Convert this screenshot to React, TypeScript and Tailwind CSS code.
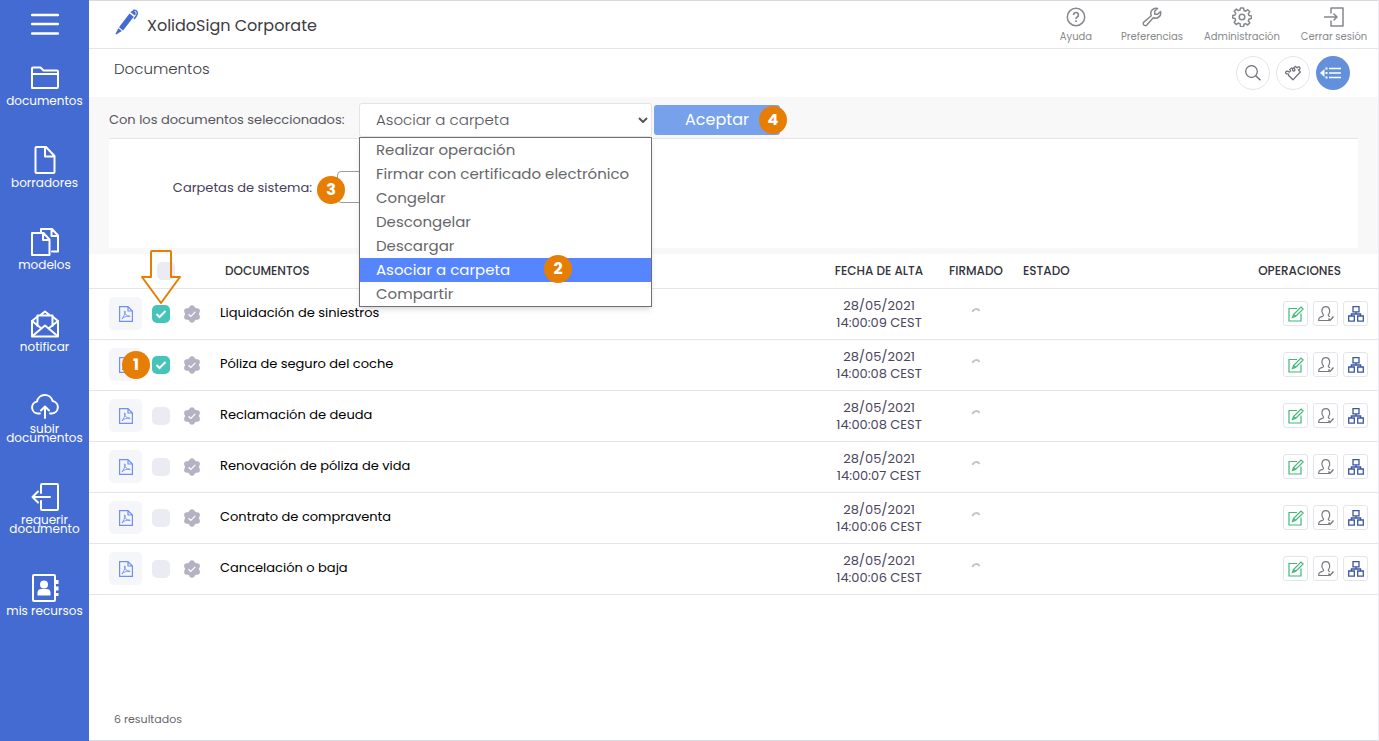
import React, { useState } from 'react';

interface DocumentRow {
  id: number;
  name: string;
  date: string;
  time: string;
}

const DOCUMENTS: DocumentRow[] = [
  { id: 1, name: 'Liquidación de siniestros', date: '28/05/2021', time: '14:00:09 CEST' },
  { id: 2, name: 'Póliza de seguro del coche', date: '28/05/2021', time: '14:00:08 CEST' },
  { id: 3, name: 'Reclamación de deuda', date: '28/05/2021', time: '14:00:08 CEST' },
  { id: 4, name: 'Renovación de póliza de vida', date: '28/05/2021', time: '14:00:07 CEST' },
  { id: 5, name: 'Contrato de compraventa', date: '28/05/2021', time: '14:00:06 CEST' },
  { id: 6, name: 'Cancelación o baja', date: '28/05/2021', time: '14:00:06 CEST' },
];

const ACTIONS = [
  'Realizar operación',
  'Firmar con certificado electrónico',
  'Congelar',
  'Descongelar',
  'Descargar',
  'Asociar a carpeta',
  'Compartir',
];

// Sidebar icons share a 28px box
const SIDEBAR_ITEMS = [
  {
    label: 'documentos',
    icon: <path d="M1 24V4.500a1 1 0 0 1 1-1h7.500l3 3H26a1 1 0 0 1 1 1V23a1 1 0 0 1-1 1H2a1 1 0 0 1-1-1M1 10h26" />,
  },
  {
    label: 'borradores',
    icon: <path d="M5.500 1h9.500l8.500 9v16a1 1 0 0 1-1 1h-17a1 1 0 0 1-1-1V2a1 1 0 0 1 1-1zM14 1v9.500h9.500" />,
  },
  {
    label: 'modelos',
    icon: (
      <>
        <path d="M1 5h11.500l6 6.500V27H1zM12 5v7h6.500" />
        <path d="M10 4V1h11l6 6.500V23.500h-6M20.500 1v7H27" />
      </>
    ),
  },
  {
    label: 'notificar',
    icon: (
      <>
        <path d="M6.500 6.500 1 11v15.500h26V11l-5.500-4.500" />
        <path d="M6.500 16V5.500h15V16M9.500 5 14 1.500 18.500 5" />
        <path d="m1 11 9.500 7.500M27 11l-9.500 7.500M1.500 26 14 15.500 26.500 26" />
      </>
    ),
  },
  {
    label: 'subir documentos',
    icon: (
      <>
        <path d="M9 21.500H7a6 6 0 0 1-1-11.900 8 8 0 0 1 15.600-.6A6.300 6.300 0 0 1 21 21.500h-2" />
        <path d="M14 26V14.500M10 18.500l4-4 4 4" />
      </>
    ),
  },
  {
    label: 'requerir documento',
    icon: (
      <>
        <path d="M10 10V2a1 1 0 0 1 1-1h15a1 1 0 0 1 1 1v24a1 1 0 0 1-1 1H11a1 1 0 0 1-1-1v-8" />
        <path d="M19 14H1.500M7 8.500 1.500 14 7 19.500" />
      </>
    ),
  },
  {
    label: 'mis recursos',
    icon: (
      <>
        <rect x="2" y="1" width="22" height="26" rx="1" />
        <path d="M26 6v4M26 12.500v4M26 19v3" strokeWidth="3" strokeLinecap="butt" />
        <circle cx="13" cy="10.500" r="4" fill="currentColor" stroke="none" />
        <path d="M6.500 21.500v-2.500a4 4 0 0 1 4-4h5a4 4 0 0 1 4 4v2.500z" fill="currentColor" stroke="none" />
      </>
    ),
  },
];

const HEADER_ITEMS = [
  {
    label: 'Ayuda',
    width: 'w-[68px]',
    icon: (
      <>
        <circle cx="10" cy="10" r="8.700" />
        <path d="M7.600 7.900a2.400 2.400 0 1 1 3.600 2.100c-.8.500-1.200.9-1.200 1.900M10 13.300v1.600" strokeWidth="1.700" />
      </>
    ),
  },
  {
    label: 'Preferencias',
    width: 'w-[84px]',
    icon: (
      <path d="M15.500 1.500 12.700 4.300v3h3l2.800-2.800a5.200 5.200 0 0 1-7.200 6.200l-6.500 7.300a2 2 0 0 1-3-2.900l7.500-6.400a5.200 5.200 0 0 1 6.200-7.200z" />
    ),
  },
  {
    label: 'Administración',
    width: 'w-[96px]',
    icon: (
      <>
        <circle cx="10" cy="10" r="2.800" />
        <path d="M8.500 1h3l.5 2.500 1.600.7 2.200-1.500 2 2-1.500 2.200.7 1.600 2.500.5v2.500l-2.500.6-.7 1.600 1.500 2.200-2.100 2.100-2.200-1.400-1.500.6-.5 2.500h-3L8 16.700l-1.600-.6-2.200 1.400-2-2 1.400-2.300-.6-1.600L.700 11V8.500L3 8l.7-1.600-1.500-2.200 2.100-2.100 2.200 1.500L8 3z" />
      </>
    ),
  },
  {
    label: 'Cerrar sesión',
    width: 'w-[88px]',
    icon: (
      <>
        <path d="M7 6.500V1h12v18H7v-5.500" />
        <path d="M0 10h13M9.500 6.500 13 10l-3.500 3.500" />
      </>
    ),
  },
];

function StepBadge({ step, className }: { step: number; className: string }) {
  return (
    <span
      className={`absolute z-20 flex size-7 items-center justify-center rounded-full bg-[#e67e04] text-base font-bold text-white ${className}`}
    >
      {step}
    </span>
  );
}

function Sidebar() {
  return (
    <nav className="flex w-[89px] shrink-0 flex-col items-center bg-[#446bd2] pt-[10px] text-white">
      <button aria-label="Menú" className="mb-[26px]">
        <svg className="size-7" viewBox="0 0 28 28" fill="none" stroke="currentColor" strokeWidth="2.500" strokeLinecap="round">
          <path d="M1 5h26M1 14h26M1 23.500h26" />
        </svg>
      </button>
      <div className="flex flex-col items-center gap-[41px]">
        {SIDEBAR_ITEMS.map((item) => (
          <a key={item.label} href="#" className="flex w-20 flex-col items-center gap-1 text-center text-xs leading-[9px]">
            <svg
              className="size-7"
              viewBox="0 0 28 28"
              fill="none"
              stroke="currentColor"
              strokeWidth="2"
              strokeLinejoin="round"
              strokeLinecap="round"
            >
              {item.icon}
            </svg>
            <span>{item.label}</span>
          </a>
        ))}
      </div>
    </nav>
  );
}

function Header() {
  return (
    <header className="flex h-[49px] items-center justify-between border-y border-t-[#d8d8da] border-b-[#e6e6ea]">
      <div className="flex items-center gap-[6px] pt-[2px] pl-[26px]">
        <svg className="-mt-2 size-[26px]" viewBox="0 0 26 26" fill="#446bd2">
          <path d="M14.500 4.500 18.800 7.800 8 21.500l-4-3.200z" />
          <path d="M3.400 19.200 6.800 22 1.300 25.500l-.8-.7z" />
          <path d="M15.500 3.300c1-1.600 2.800-2 4.200-.9 1.400 1.200 1.400 2.700.2 4.200z" />
          <path d="M18 1.500c2-1 4.500.3 4.300 3-.1 1.500-1.700 3.500-3.200 5.500" fill="none" stroke="#446bd2" strokeWidth="1.500" />
        </svg>
        <span className="text-base text-[#3c3c44]">XolidoSign Corporate</span>
      </div>
      <nav className="flex">
        {HEADER_ITEMS.map((item) => (
          <a
            key={item.label}
            href="#"
            className={`flex flex-col items-center gap-[2px] text-[10px] leading-4 whitespace-nowrap text-[#85888c] ${item.width}`}
          >
            <svg
              className="mt-[2px] size-5"
              viewBox="0 0 20 20"
              fill="none"
              stroke="currentColor"
              strokeWidth="1.500"
              strokeLinejoin="round"
            >
              {item.icon}
            </svg>
            {item.label}
          </a>
        ))}
      </nav>
    </header>
  );
}

function TitleBar() {
  return (
    <div className="flex h-12 items-center justify-between pr-7 pl-[25px]">
      <h1 className="pb-2 text-[15px] font-light text-[#3c3c44]">Documentos</h1>
      <div className="flex gap-[6px] text-[#6d6d75]">
        <button aria-label="Buscar" className="flex size-[34px] items-center justify-center rounded-full border border-[#e4e5ea]">
          <svg className="size-4" viewBox="0 0 16 16" fill="none" stroke="currentColor" strokeWidth="1.200">
            <circle cx="6.500" cy="6.500" r="5.800" />
            <path d="m10.700 10.700 4.800 4.500" strokeWidth="1.400" />
          </svg>
        </button>
        <button aria-label="Complementos" className="flex size-[34px] items-center justify-center rounded-full border border-[#e4e5ea]">
          <svg className="size-4" viewBox="0 0 16 16" fill="none" stroke="currentColor" strokeWidth="1.200" strokeLinejoin="round">
            <path d="M8 14.800 3.300 10.300c.7-.9.200-1.600-.8-1.500C.800 9 0 7.600 1 6.600c.9-.9 2.200-.4 3.200.6l1.500-1.300-1-1.200 1.900-1.900c1.200.2 1 1.300.9 2 0 1.500 1.700 1.700 2.300.6.500-1-.1-1.700-1.300-2.300L10.200 1.300l1.800 1.500c.8-1.200 2.600-1.300 3 .1.300 1.200-.6 1.700-1.700 1.900l2 2.200z" />
          </svg>
        </button>
        <button aria-label="Ver lista" className="flex size-[34px] items-center justify-center rounded-full bg-[#6290da] text-white">
          <svg className="mr-1 h-3 w-[22px]" viewBox="0 0 22 12" fill="none" stroke="currentColor" strokeWidth="1.500">
            <path d="M9 1.500h12M9 6h12M9 10.500h12" />
            <path d="M5.500 1.500h2M5.500 6h2M5.500 10.500h2" strokeWidth="2" />
            <path d="M4.500 2v8L0 6z" fill="currentColor" stroke="none" />
          </svg>
        </button>
      </div>
    </div>
  );
}

function ActionBar() {
  const [action, setAction] = useState('Asociar a carpeta');

  return (
    <section className="bg-[#f8f8f9] px-5 pt-[6px] pb-[6px]">
      <div className="flex h-[35px] items-start">
        <label htmlFor="action" className="w-[250px] shrink-0 text-[13px] leading-[34px] whitespace-nowrap text-[#55555c]">
          Con los documentos seleccionados:
        </label>
        <div className="relative w-[293px] shrink-0">
          <select
            id="action"
            value={action}
            onChange={(e) => setAction(e.target.value)}
            className="h-[34px] w-full appearance-none rounded-[3px] border border-[#e4e4e8] bg-white pl-4 text-[15px] font-light text-[#55555a]"
          >
            {ACTIONS.map((name) => (
              <option key={name}>{name}</option>
            ))}
          </select>
          <svg className="pointer-events-none absolute top-[14px] right-1 h-[6px] w-[10px]" viewBox="0 0 10 6" fill="none" stroke="#55555a" strokeWidth="2">
            <path d="m1 1 4 4 4-4" />
          </svg>
          <ul
            role="listbox"
            className="absolute top-[34px] left-0 z-10 w-full border border-[#707074] bg-white text-[15px] leading-6 whitespace-nowrap text-[#666669] shadow-md"
          >
            {ACTIONS.map((name) => (
              <li
                key={name}
                role="option"
                aria-selected={name === action}
                onClick={() => setAction(name)}
                className="relative px-4 aria-selected:bg-[#5585ff] aria-selected:text-white"
              >
                {name}
                {name === 'Asociar a carpeta' && <StepBadge step={2} className="-top-[3px] left-[184px]" />}
              </li>
            ))}
          </ul>
        </div>
        <button className="relative mt-[2px] ml-[2px] h-[30px] w-[126px] rounded-[3px] bg-[#78a1eb] text-base text-white">
          Aceptar
          <StepBadge step={4} className="top-px -right-[7px]" />
        </button>
      </div>
      <div className="flex h-[110px] items-start border-t border-[#e6e6e9] bg-white pt-8">
        <label htmlFor="folder" className="w-[203px] pt-px text-right text-[13px] leading-8 text-[#44405a]">
          Carpetas de sistema:
        </label>
        <div className="relative ml-[25px]">
          <select id="folder" className="h-8 w-[280px] appearance-none rounded-[4px] border border-[#9a9aa0] bg-white" />
          <StepBadge step={3} className="top-[5px] -left-5" />
        </div>
      </div>
    </section>
  );
}

function Tick() {
  return (
    <svg className="pointer-events-none absolute inset-0 size-[18px]" viewBox="0 0 18 18" fill="none" stroke="white" strokeWidth="2">
      <path d="m4.500 9 3 3 6-6" />
    </svg>
  );
}

// Grey seal with six rounded lobes
function SealIcon() {
  return (
    <svg className="mx-auto size-[18px]" viewBox="0 0 18 18" fill="#b5b2c4">
      <circle cx="9" cy="9" r="7.200" />
      <circle cx="9" cy="3" r="2.700" />
      <circle cx="14.200" cy="6" r="2.700" />
      <circle cx="14.200" cy="12" r="2.700" />
      <circle cx="9" cy="15" r="2.700" />
      <circle cx="3.800" cy="12" r="2.700" />
      <circle cx="3.800" cy="6" r="2.700" />
      <path d="m5.500 9.300 2.300 2.200 4.500-4.600" fill="none" stroke="white" strokeWidth="1.200" />
    </svg>
  );
}

function OperationButtons() {
  const style = 'flex size-[25px] items-center justify-center rounded-[3px] border border-[#e2e6ea]';
  return (
    <div className="flex justify-end gap-[5px]">
      <button aria-label="Editar" className={style}>
        <svg className="size-4 shrink-0 text-[#3fb879]" viewBox="0 0 16 16" fill="none" stroke="currentColor" strokeWidth="1.200">
          <path d="M9 2.500H1v12.500h12V7.500" />
          <path d="m4.500 11.500 1-3L13 1l2.200 2-7.700 7.500zM5.500 8.500l2 2" />
        </svg>
      </button>
      <button aria-label="Firmante" className={style}>
        <svg className="size-4 shrink-0 text-[#77777d]" viewBox="0 0 16 16" fill="none" stroke="currentColor" strokeWidth="1.200">
          <path d="M11 14.500H.700c0-3 1-3 4-4.200.9-.4 1-1.300.4-2C3 6 3.500.700 7.800.700S12.500 6 10.700 8.300c-.6.700-.5 1.600.4 2l1 .4" />
          <path d="m10.500 12.500 1.500 2 3.500-4" strokeWidth="1.400" />
        </svg>
      </button>
      <button aria-label="Flujo" className={style}>
        <svg className="size-4 shrink-0 text-[#3a56a5]" viewBox="0 0 16 16" fill="none" stroke="currentColor" strokeWidth="1.300">
          <path d="M5 .700h6v5.200H5zM.700 10h5.600v5.200H.700zM9.700 10h5.600v5.200H9.700zM8 6v2M3.400 10V8h9.200v2" />
        </svg>
      </button>
    </div>
  );
}

function DocumentsTable() {
  const [selected, setSelected] = useState<number[]>([1, 2]);

  const toggle = (id: number) => {
    setSelected(selected.includes(id) ? selected.filter((s) => s !== id) : [...selected, id]);
  };

  return (
    <table className="w-full table-fixed border-collapse text-[13px]">
      <colgroup>
        <col className="w-[58px]" />
        <col className="w-7" />
        <col className="w-[34px]" />
        <col />
        <col className="w-[100px]" />
        <col className="w-[94px]" />
        <col className="w-[196px]" />
        <col className="w-[159px]" />
      </colgroup>
      <thead>
        <tr className="h-[34px] border-b border-[#e6e6e8] text-left text-xs leading-4 text-[#33333a]">
          <th />
          <th className="relative">
            <input
              type="checkbox"
              aria-label="Seleccionar todos"
              className="ml-[10px] block size-[18px] appearance-none rounded-[5px] bg-[#ebebf3]"
            />
            <svg
              className="pointer-events-none absolute -top-[4px] -left-[6px] z-10 h-[54px] w-10"
              viewBox="0 0 40 54"
              fill="none"
              stroke="#e67e04"
              strokeWidth="2"
              strokeLinejoin="round"
            >
              <path d="M11 1h18a1 1 0 0 1 1 1v25h9L20 53 1 27h9V2a1 1 0 0 1 1-1z" />
            </svg>
          </th>
          <th />
          <th className="pl-4 font-medium">DOCUMENTOS</th>
          <th className="text-center font-medium">FECHA DE ALTA</th>
          <th className="text-center font-medium">FIRMADO</th>
          <th className="font-medium">ESTADO</th>
          <th className="pr-[37px] text-right font-medium">OPERACIONES</th>
        </tr>
      </thead>
      <tbody>
        {DOCUMENTS.map((doc) => (
          <tr key={doc.id} className="h-[51px] border-b border-[#e6e6e8]">
            <td className="relative pl-5">
              <div className="flex size-[33px] items-center justify-center rounded-[5px] bg-[#f5f6fa]">
                <svg className="h-4 w-[14px]" viewBox="0 0 14 16" fill="none" stroke="#6f8ff5" strokeWidth="1.200">
                  <path d="M.600.600h8.400l4.400 4.400v10.400H.600zM9 .600V5h4.400" />
                  <path d="M3 13c1-1.800 3.300-5 3.200-7.500 0-1-1-.8-.8.200.5 2.500 2.600 4.500 5 5 1 .2 1-.8 0-.8-2.400 0-5.700 1-7.400 3.100z" strokeWidth=".9" />
                </svg>
              </div>
              {doc.id === 2 && <StepBadge step={1} className="top-[11px] left-[33px]" />}
            </td>
            <td>
              <div className="relative mx-auto size-[18px]">
                <input
                  type="checkbox"
                  aria-label={doc.name}
                  checked={selected.includes(doc.id)}
                  onChange={() => toggle(doc.id)}
                  className="block size-[18px] appearance-none rounded-[5px] bg-[#ebebf3] checked:bg-[#45c4b9]"
                />
                {selected.includes(doc.id) && <Tick />}
              </div>
            </td>
            <td>
              <SealIcon />
            </td>
            <td className="pb-px pl-[11px] text-black">{doc.name}</td>
            <td className="text-center leading-[17px] whitespace-nowrap text-[#4a4560]">
              {doc.date}
              <br />
              {doc.time}
            </td>
            <td>
              <svg className="mx-auto mb-[6px] h-2 w-[10px]" viewBox="0 0 10 8" fill="none" stroke="#c4c4c8" strokeWidth="2">
                <path d="M1.500 5a3.800 3.800 0 0 1 7-1" />
              </svg>
            </td>
            <td />
            <td className="pr-[10px]">
              <OperationButtons />
            </td>
          </tr>
        ))}
      </tbody>
    </table>
  );
}

export default function App() {
  return (
    <div className="flex min-h-screen bg-white font-[Poppins,Inter,sans-serif]">
      <Sidebar />
      <main className="flex min-w-0 flex-1 flex-col border-r border-b border-r-[#ececf0] border-b-[#d9d9e8]">
        <Header />
        <TitleBar />
        <ActionBar />
        <DocumentsTable />
        <footer className="mt-auto pb-[13px] pl-[25px] text-[11px] leading-4 text-[#66666c]">6 resultados</footer>
      </main>
    </div>
  );
}
